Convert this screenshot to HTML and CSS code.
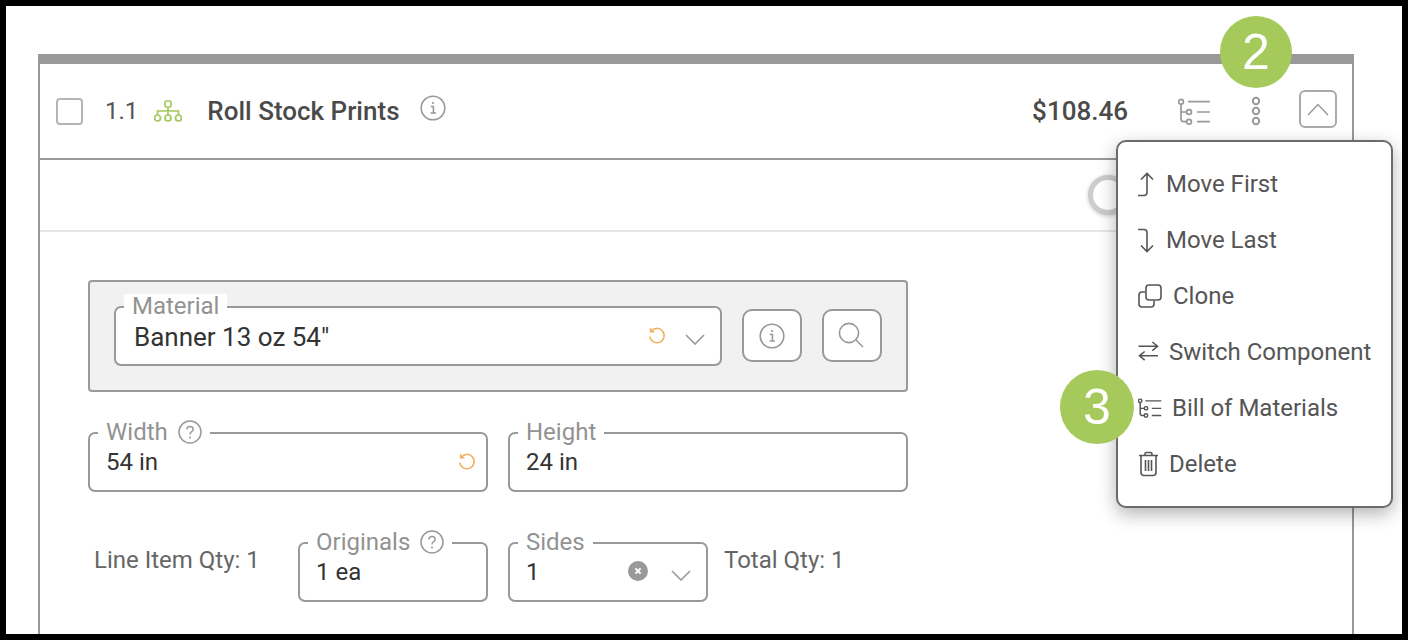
FILE: index.html
```html
<!DOCTYPE html>
<html lang="en">
<head>
    <meta charset="UTF-8">
    <meta name="viewport" content="width=device-width, initial-scale=1.0">
    <title>Roll Stock Prints</title>
    <link rel="stylesheet" href="styles.css">
</head>
<body>
    <div class="frame">
        <div class="card">
            <!-- Header -->
            <div class="card-header">
                <span class="checkbox"></span>
                <span class="item-number">1.1</span>
                <svg class="org-icon" width="28" height="22" viewBox="0 0 28 22">
                    <rect x="11" y="1" width="6" height="6" rx="1.5"/>
                    <path d="M14 7V11M3.5 15V11H24.5V15M14 11V15"/>
                    <circle cx="3.5" cy="18" r="3"/>
                    <circle cx="14" cy="18" r="3"/>
                    <circle cx="24.5" cy="18" r="3"/>
                </svg>
                <span class="item-title">Roll Stock Prints</span>
                <svg class="info-icon" width="26" height="26" viewBox="0 0 26 26">
                    <circle cx="13" cy="13" r="11.8"/>
                    <path d="M10.8 11.5H13.4V18M10.6 18H16"/>
                    <circle class="dot" cx="13" cy="8" r="1.1"/>
                </svg>
                <span class="item-price">$108.46</span>
                <svg class="bom-icon" width="33" height="27" viewBox="0 0 33 27">
                    <circle cx="3" cy="3.7" r="2.4"/>
                    <circle cx="11" cy="14" r="2.4"/>
                    <circle cx="11" cy="23.7" r="2.4"/>
                    <path d="M3 6V21Q3 23.7 6 23.7H8.6M3 14H8.6M10 3.7H32M19 14H32M19 23.7H32"/>
                </svg>
                <svg class="dots-icon" width="10" height="30" viewBox="0 0 10 30">
                    <circle cx="5" cy="5" r="3.2"/>
                    <circle cx="5" cy="15" r="3.2"/>
                    <circle cx="5" cy="25" r="3.2"/>
                </svg>
                <button class="collapse-btn">
                    <svg width="22" height="13" viewBox="0 0 22 13"><path d="M1 12L11 1.5L21 12"/></svg>
                </button>
            </div>

            <!-- Toggle row -->
            <div class="toggle-row">
                <span class="toggle-knob"></span>
            </div>

            <!-- Form -->
            <div class="form">
                <div class="material-panel">
                    <div class="field material-field">
                        <label class="field-label">Material</label>
                        <span class="field-value">Banner 13 oz 54"</span>
                        <svg class="reset-icon" width="18" height="18" viewBox="0 0 18 18">
                            <path d="M3 4.5A7.2 7.2 0 1 1 1.8 9.5M2.6 1V4.8H6.4"/>
                        </svg>
                        <svg class="chevron" width="20" height="11" viewBox="0 0 20 11"><path d="M1 1L10 10L19 1"/></svg>
                    </div>
                    <button class="icon-btn">
                        <svg class="info-icon" width="26" height="26" viewBox="0 0 26 26">
                            <circle cx="13" cy="13" r="11.8"/>
                            <path d="M10.8 11.5H13.4V18M10.6 18H16"/>
                            <circle class="dot" cx="13" cy="8" r="1.1"/>
                        </svg>
                    </button>
                    <button class="icon-btn">
                        <svg class="search-icon" width="28" height="28" viewBox="0 0 28 28">
                            <circle cx="11" cy="11" r="9.6"/>
                            <path d="M18 18L25 25"/>
                        </svg>
                    </button>
                </div>

                <div class="size-row">
                    <div class="field">
                        <label class="field-label">Width
                            <svg class="help-icon" width="24" height="24" viewBox="0 0 24 24">
                                <circle cx="12" cy="12" r="11"/>
                                <path d="M8.8 9.4Q9 6.4 12 6.4Q15.2 6.4 15.2 9.2Q15.2 10.8 13.4 11.8Q12 12.6 12 14.6"/>
                                <circle class="dot" cx="12" cy="17.6" r="1"/>
                            </svg>
                        </label>
                        <span class="field-value">54 in</span>
                        <svg class="reset-icon" width="18" height="18" viewBox="0 0 18 18">
                            <path d="M3 4.5A7.2 7.2 0 1 1 1.8 9.5M2.6 1V4.8H6.4"/>
                        </svg>
                    </div>
                    <div class="field">
                        <label class="field-label">Height</label>
                        <span class="field-value">24 in</span>
                    </div>
                </div>

                <div class="qty-row">
                    <span class="qty-text line-qty">Line Item Qty: 1</span>
                    <div class="field originals-field">
                        <label class="field-label">Originals
                            <svg class="help-icon" width="24" height="24" viewBox="0 0 24 24">
                                <circle cx="12" cy="12" r="11"/>
                                <path d="M8.8 9.4Q9 6.4 12 6.4Q15.2 6.4 15.2 9.2Q15.2 10.8 13.4 11.8Q12 12.6 12 14.6"/>
                                <circle class="dot" cx="12" cy="17.6" r="1"/>
                            </svg>
                        </label>
                        <span class="field-value">1 ea</span>
                    </div>
                    <div class="field sides-field">
                        <label class="field-label">Sides</label>
                        <span class="field-value">1</span>
                        <svg class="clear-icon" width="20" height="20" viewBox="0 0 20 20">
                            <circle cx="10" cy="10" r="10"/>
                            <path d="M7.4 7.4L12.6 12.6M12.6 7.4L7.4 12.6"/>
                        </svg>
                        <svg class="chevron" width="20" height="11" viewBox="0 0 20 11"><path d="M1 1L10 10L19 1"/></svg>
                    </div>
                    <span class="qty-text">Total Qty: 1</span>
                </div>
            </div>
        </div>

        <!-- Dropdown menu -->
        <div class="menu">
            <div class="menu-item">
                <svg class="move-first" width="18" height="25" viewBox="0 0 18 25"><path d="M0 23.5H6Q9 23.5 9 20.5V1.5M3 7.5L9 1.5L15 7.5"/></svg>
                <span>Move First</span>
            </div>
            <div class="menu-item">
                <svg class="move-last" width="18" height="25" viewBox="0 0 18 25"><path d="M0 1.5H6Q9 1.5 9 4.5V23.5M3 17.5L9 23.5L15 17.5"/></svg>
                <span>Move Last</span>
            </div>
            <div class="menu-item">
                <svg class="clone" width="24" height="24" viewBox="0 0 24 24">
                    <rect x="8" y="1" width="15" height="15" rx="3"/>
                    <path d="M7 8H4Q1 8 1 11V20Q1 23 4 23H13Q16 23 16 20V17"/>
                </svg>
                <span>Clone</span>
            </div>
            <div class="menu-item">
                <svg class="switch" width="21" height="22" viewBox="0 0 22 22"><path d="M0.5 5H20.5M15 0.5L20.5 5L15 9.5M21 15H1.5M7 10.5L1.5 15L7 19.5"/></svg>
                <span>Switch Component</span>
            </div>
            <div class="menu-item">
                <svg class="bom-small" width="24" height="20" viewBox="0 0 33 27">
                    <circle cx="3" cy="3.7" r="2.4"/>
                    <circle cx="11" cy="14" r="2.4"/>
                    <circle cx="11" cy="23.7" r="2.4"/>
                    <path d="M3 6V21Q3 23.7 6 23.7H8.6M3 14H8.6M10 3.7H32M19 14H32M19 23.7H32"/>
                </svg>
                <span>Bill of Materials</span>
            </div>
            <div class="menu-item">
                <svg class="trash" width="21" height="26" viewBox="0 0 21 26">
                    <path d="M1 4.5H20M7 4.5V3Q7 1.5 8.5 1.5H12.5Q14 1.5 14 3V4.5M3 4.5V21.5Q3 24.5 6 24.5H15Q18 24.5 18 21.5V4.5M7.5 9V20M10.5 9V20M13.5 9V20"/>
                </svg>
                <span>Delete</span>
            </div>
        </div>

        <!-- Callout badges -->
        <div class="badge badge-two">2</div>
        <div class="badge badge-three">3</div>
    </div>
</body>
</html>
```

FILE: styles.css
```css
* {
    margin: 0;
    padding: 0;
    box-sizing: border-box;
    font-family: Roboto, 'Liberation Sans', sans-serif;
}

body {
    background-color: #000;
    overflow: hidden;
}

svg {
    display: block;
    flex-shrink: 0;
    fill: none;
}

.frame {
    position: relative;
    width: 1396px;
    height: 628px;
    margin: 6px;
    background-color: white;
    overflow: hidden;
}

.card {
    margin: 48px 48px 0 32px;
    height: 640px;
    border: 2px solid #999;
    border-top: 10px solid #999;
}

/* Header */
.card-header {
    display: flex;
    align-items: center;
    height: 96px;
    padding: 0 15px 0 16px;
    border-bottom: 2px solid #999;
}

.checkbox {
    width: 27px;
    height: 27px;
    border: 2px solid #b5b5b5;
    border-radius: 4px;
}

.item-number {
    margin-left: 22px;
    font-size: 24px;
    color: #555;
}

.org-icon {
    margin-left: 16px;
    stroke: #a5c95a;
    stroke-width: 1.7;
}

.item-title {
    margin-left: 25px;
    font-size: 26px;
    font-weight: 500;
    color: #4a4a4a;
}

.info-icon {
    stroke: #999;
    stroke-width: 1.6;
}

.info-icon .dot,
.help-icon .dot {
    fill: #999;
    stroke: none;
}

.card-header .info-icon {
    margin: -6px 0 0 20px;
}

.item-price {
    margin-left: auto;
    font-size: 26px;
    font-weight: 500;
    color: #4a4a4a;
}

.bom-icon {
    margin-left: 50px;
    stroke: #999;
    stroke-width: 1.7;
}

.dots-icon {
    margin-left: 40px;
    stroke: #999;
    stroke-width: 2;
}

.collapse-btn {
    display: flex;
    align-items: center;
    justify-content: center;
    width: 38px;
    height: 38px;
    margin: -4px 0 0 38px;
    background: white;
    border: 2px solid #aaa;
    border-radius: 6px;
}

.collapse-btn svg {
    stroke: #999;
    stroke-width: 1.5;
}

/* Toggle row */
.toggle-row {
    display: flex;
    align-items: center;
    justify-content: flex-end;
    height: 72px;
    padding-right: 224px;
    border-bottom: 2px solid #e6e6e6;
}

.toggle-knob {
    width: 40px;
    height: 40px;
    border: 5px solid #ccc;
    border-radius: 50%;
    background-color: white;
    box-shadow: 0 1px 4px rgba(0,0,0,0.2);
}

/* Form */
.form {
    width: 868px;
    padding: 48px 0 0 48px;
}

.material-panel {
    display: flex;
    align-items: flex-start;
    gap: 20px;
    height: 112px;
    padding: 24px 24px;
    background-color: #f1f1f1;
    border: 2px solid #999;
    border-radius: 4px;
}

.field {
    position: relative;
    display: flex;
    align-items: center;
    height: 60px;
    padding: 0 15px 0 16px;
    background-color: white;
    border: 2px solid #999;
    border-radius: 7px;
}

.material-field {
    width: 608px;
    flex-shrink: 0;
    padding-left: 18px;
}

.material-field .field-value {
    font-size: 26px;
    margin-top: 1px;
}

.field-label {
    position: absolute;
    top: -14px;
    left: 8px;
    display: flex;
    align-items: center;
    gap: 10px;
    height: 24px;
    padding: 0 8px;
    background-color: white;
    font-size: 24px;
    color: #929292;
}

.field-value {
    font-size: 24px;
    color: #333;
}

.reset-icon {
    margin-left: auto;
    stroke: #f2b05e;
    stroke-width: 1.5;
}

.material-field .reset-icon {
    margin-right: 19px;
}

.size-row .reset-icon {
    margin-right: -5px;
}

.chevron {
    margin-top: 6px;
    stroke: #999;
    stroke-width: 1.6;
}

.help-icon {
    stroke: #999;
    stroke-width: 1.5;
}

.icon-btn {
    display: flex;
    align-items: center;
    justify-content: center;
    width: 60px;
    height: 53px;
    margin-top: 3px;
    background-color: white;
    border: 2px solid #999;
    border-radius: 10px;
}

.search-icon {
    stroke: #999;
    stroke-width: 1.6;
}

.size-row {
    display: grid;
    grid-template-columns: 400px 400px;
    gap: 20px;
    margin-top: 40px;
}

.qty-row {
    display: flex;
    align-items: flex-start;
    margin-top: 50px;
}

.qty-text {
    margin-top: 4px;
    font-size: 24px;
    color: #666;
}

.line-qty {
    width: 204px;
    margin-left: 6px;
}

.originals-field {
    width: 190px;
    margin-right: 20px;
}

.sides-field {
    width: 200px;
    margin-right: 16px;
}

.sides-field .clear-icon {
    margin: -2px 23px 0 auto;
}

.clear-icon {
    fill: #999;
}

.clear-icon path {
    stroke: white;
    stroke-width: 2;
}

/* Dropdown */
.menu {
    position: absolute;
    top: 134px;
    left: 1110px;
    width: 277px;
    height: 368px;
    padding: 14px 0 0 20px;
    background-color: white;
    border: 2px solid #6b6b6b;
    border-radius: 10px;
    box-shadow: 0 6px 18px rgba(0,0,0,0.3);
}

.menu-item {
    display: flex;
    align-items: center;
    gap: 10px;
    height: 56px;
    font-size: 24px;
    color: #555;
}

.menu-item svg {
    stroke: #555;
    stroke-width: 1.6;
}

.menu-item .clone {
    margin-right: 1px;
}

.menu-item .bom-small {
    stroke-width: 2;
}

/* Callouts */
.badge {
    position: absolute;
    display: flex;
    align-items: center;
    justify-content: center;
    border-radius: 50%;
    background-color: #a5c95a;
    color: white;
    font-family: 'Liberation Sans', Arial, sans-serif;
    font-size: 50px;
}

.badge-two {
    top: 10px;
    left: 1214px;
    width: 72px;
    height: 72px;
}

.badge-three {
    top: 364px;
    left: 1054px;
    width: 74px;
    height: 74px;
}
```
